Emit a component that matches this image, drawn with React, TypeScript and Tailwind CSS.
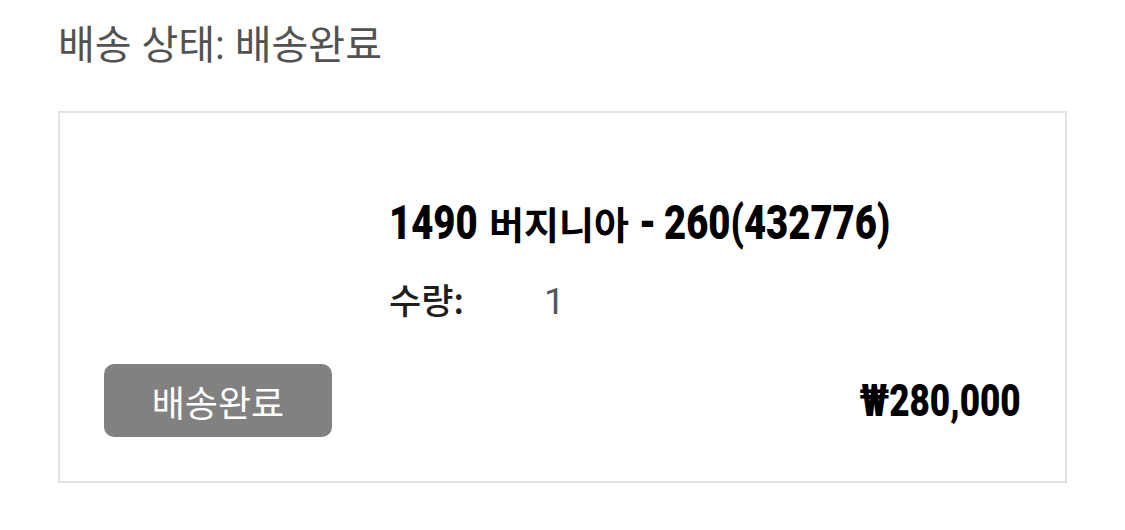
import React from 'react';

const kr = { fontFamily: '"Noto Sans CJK KR", sans-serif' };
const latin = { fontFamily: 'Roboto, "Noto Sans CJK KR", sans-serif' };

// 좁은 굵은 숫자 (condensed 대용)
function Narrow({ children, w }: { children: React.ReactNode; w: number }) {
    return (
        <span className="inline-block whitespace-nowrap" style={{ width: w }}>
            <span className="inline-block origin-left scale-x-[0.78]" style={latin}>{children}</span>
        </span>
    );
}

export default function App() {
    return (
        <div className="w-[1125px] h-[530px] bg-white pl-[58px] pt-[18px]" style={latin}>
            {/* 상태 */}
            <div className="text-[40px] leading-[56px] text-[#525252]">배송 상태: 배송완료</div>

            {/* 주문 카드 */}
            <div className="mt-[37px] w-[1009px] h-[372px] border-2 border-[#e3e3e3] px-[44px] flex flex-col">
                <div className="flex pt-[85px]">
                    <div className="w-[285px] shrink-0"></div>
                    <div className="flex flex-col">
                        <div className="flex items-baseline text-black leading-[50px] whitespace-nowrap">
                            <span className="text-[49px] font-black"><Narrow w={100}>1490</Narrow></span>
                            <span className="text-[38px] font-bold" style={kr}>버지니아</span>
                            <span className="text-[49px] font-black ml-[10px]"><Narrow w={25}>-</Narrow></span>
                            <span className="text-[49px] font-black"><Narrow w={230}>260(432776)</Narrow></span>
                        </div>
                        <div className="flex items-baseline mt-[29px] leading-[44px]">
                            <span className="text-[35px] font-medium text-[#1e1e1e] w-[155px]" style={kr}>수량:</span>
                            <span className="text-[37px] text-[#555]">1</span>
                        </div>
                    </div>
                </div>
                <div className="flex items-center justify-between mt-[40px]">
                    <button className="w-[228px] h-[73px] rounded-[10px] bg-[#818181] text-white text-[36px] leading-none" style={kr}>배송완료</button>
                    <span className="inline-block origin-right scale-x-[0.78] text-[45px] font-black text-black whitespace-nowrap" style={latin}>₩280,000</span>
                </div>
            </div>
        </div>
    );
}
